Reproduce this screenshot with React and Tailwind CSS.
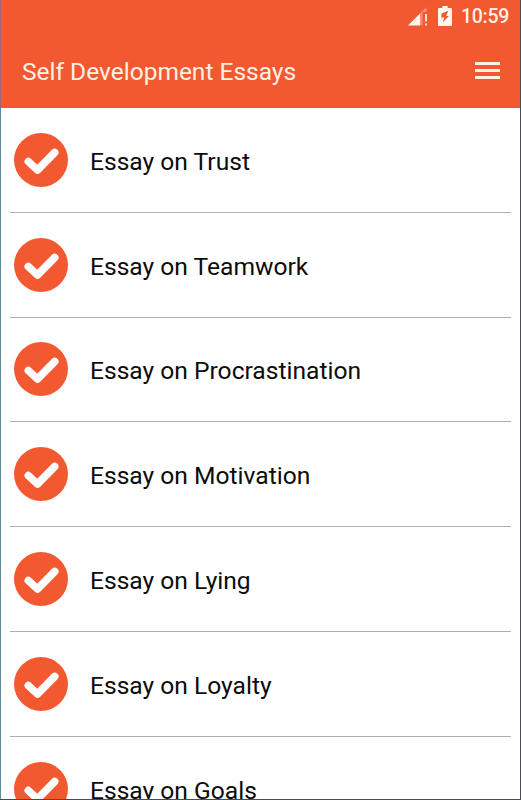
import React from "react"

const essays = [
  "Essay on Trust",
  "Essay on Teamwork",
  "Essay on Procrastination",
  "Essay on Motivation",
  "Essay on Lying",
  "Essay on Loyalty",
  "Essay on Goals",
]

function SignalIcon() {
  return (
    <svg width="20" height="19" viewBox="0 0 20 19" className="mr-[10px]">
      <path d="M0 18.5 L12 6.5 V18.5 Z" fill="#fff5ee" />
      <path d="M12 6.5 L18.5 0 V5 H14.5 V18.5 H12 Z" fill="#fff5ee" opacity="0.35" />
      <path d="M17 7 H19 V14.5 H17 Z M17 16.5 H19 V18.5 H17 Z" fill="#fff5ee" opacity="0.85" />
    </svg>
  )
}

function BatteryIcon() {
  return (
    <svg width="14" height="20" viewBox="0 0 13 20" preserveAspectRatio="none" className="mr-[9px]">
      <path
        d="M4 0 H9 V2 H12 Q13 2 13 3 V19 Q13 20 12 20 H1 Q0 20 0 19 V3 Q0 2 1 2 H4 Z"
        fill="#fff5ee"
      />
      <path d="M9.6 4.8 L3.4 7.6 L3 11.6 H6 L4.2 16.8 L10 10 H7.4 Z" fill="#f35930" />
    </svg>
  )
}

function CheckIcon() {
  return (
    <svg width="54" height="54" viewBox="0 0 54 54" className="shrink-0">
      <circle cx="27" cy="27" r="27" fill="#f35930" />
      <path
        d="M14.3 28.5 L23.5 37 L40.7 19.5"
        fill="none"
        stroke="#fff"
        strokeWidth="7.6"
        strokeLinecap="round"
        strokeLinejoin="round"
      />
    </svg>
  )
}

export default function App() {
  return (
    <div className="flex h-[800px] w-[521px] flex-col overflow-hidden border-r border-b border-[#4b4b50] bg-white font-['Roboto',sans-serif]">
      <header className="h-[108px] shrink-0 border-l border-[#a3627a] bg-[#f35930] text-[#fff0e4]">
        <div className="flex h-[32px] items-center justify-end pr-[11px]">
          <SignalIcon />
          <BatteryIcon />
          <span className="pt-0.5 text-[19.5px] leading-none font-medium tracking-[-0.3px]">10:59</span>
        </div>
        <div className="flex h-[76px] items-center justify-between pr-5 pl-[21px]">
          <h1 className="pt-1 text-[24.5px] leading-none">Self Development Essays</h1>
          <button className="flex w-[25px] flex-col gap-[4px]" aria-label="Menu">
            <span className="h-[3px] w-full bg-[#fff0e4]" />
            <span className="h-[3px] w-full bg-[#fff0e4]" />
            <span className="h-[3px] w-full bg-[#fff0e4]" />
          </button>
        </div>
      </header>

      <ul className="min-h-0 flex-1 overflow-hidden border-l border-[#5f8c9c] pr-[9px] pl-[9px]">
        {essays.map((title) => (
          <li
            key={title}
            className="flex h-[104.8px] items-center border-b border-[#adadad] pl-1"
          >
            <CheckIcon />
            <span className="ml-[22px] pt-[4.5px] text-[24.6px] leading-none text-[#0c0c0c]">{title}</span>
          </li>
        ))}
      </ul>
    </div>
  )
}
